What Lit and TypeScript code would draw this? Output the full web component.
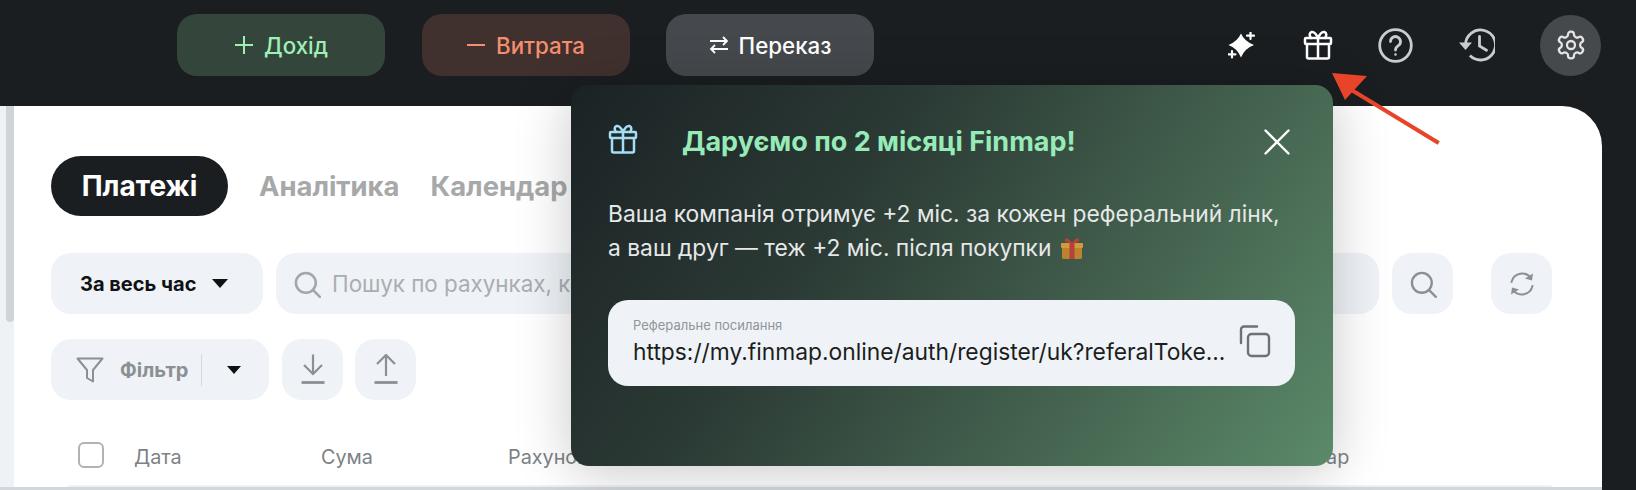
import { LitElement, html, css, svg } from "lit";
import { customElement } from "lit/decorators.js";

const gift = (cls: string) => html`<svg class=${cls} viewBox="0 0 30 30" fill="none" stroke="currentColor" stroke-width="2.500" stroke-linejoin="round" stroke-linecap="round">
  <rect x="2" y="8" width="26" height="6" rx="1"/><path d="M4 14v13a1.500 1.500 0 0 0 1.500 1.500h19A1.500 1.500 0 0 0 26 27V14M15 8v20.500"/>
  <path d="M15 8C13 3.500 10.500 1.500 8.500 2S6 5.500 8 8M15 8c2-4.500 4.500-6.500 6.500-6S24 5.500 22 8"/></svg>`;

const caret = html`<svg class="caret" viewBox="0 0 16 10" preserveAspectRatio="none"><path d="M0 0h16L8 10z" fill="currentColor"/></svg>`;
const searchPath = svg`<circle cx="11" cy="11" r="8.500"/><path d="M17.500 17.500 23 23"/>`;

@customElement("app-root")
export class AppRoot extends LitElement {
  static styles = css`
    :host { display: block; position: relative; width: 1636px; height: 490px; overflow: hidden; background: #1a1e21; font-family: Inter, "Noto Sans", sans-serif; color: #16191c; }
    svg { display: block; flex: none; }
    .top { height: 106px; display: flex; align-items: flex-start; padding: 14px 35px 0 177px; box-sizing: border-box; }
    .act { width: 208px; height: 62px; border-radius: 20px; display: flex; align-items: center; justify-content: center; gap: 10px; font-size: 22.300px; font-weight: 500; margin-right: 36.500px; }
    .act svg { width: 20px; height: 20px; }
    .inc { background: #34463c; color: #9ef0b5; }
    .exp { background: #40312e; color: #f68d6e; }
    .tr { background: #45484c; color: #fff; }
    .tools { margin-left: auto; display: flex; align-items: center; height: 62px; color: #fff; }
    .spark { width: 27px; height: 27px; margin-right: 48px; }
    .tgift { width: 30px; height: 30px; margin-right: 45px; }
    .help { width: 35px; height: 35px; margin-right: 46px; color: #c9cbcc; }
    .hist { width: 36px; height: 34px; margin-right: 45px; color: #c9cbcc; }
    .gear { width: 61px; height: 61px; border-radius: 50%; background: #46494c; display: flex; align-items: center; justify-content: center; color: #e4e5e6; }
    .gear svg { width: 32px; height: 32px; }
    .body { display: flex; height: 381px; }
    .rail { width: 14px; background: #eef2f6; padding-left: 6px; box-sizing: border-box; flex: none; }
    .thumb { width: 8px; height: 216px; background: #cfd4d9; border-radius: 0 0 4px 4px; }
    .card { width: 1588px; background: #fff; border-top-right-radius: 40px; box-sizing: border-box; padding: 50px 50px 0 37px; }
    .bar { height: 3px; width: 1602px; background: #d2d7db; }
    .tabs { display: flex; align-items: center; height: 60px; gap: 31px; font-size: 27.400px; font-weight: 700; color: #a6a8a9; }
    .tab-on { background: #1a1e21; color: #fff; border-radius: 30px; height: 60px; width: 177px; font-size: 28px; display: flex; align-items: center; justify-content: center; }
    .row { display: flex; height: 61px; gap: 13px; }
    .r1 { margin-top: 37px; }
    .r2 { margin-top: 25px; }
    .pill { background: #eff3f7; border-radius: 20px; display: flex; align-items: center; justify-content: center; flex: none; color: #8b9094; }
    .period { width: 212px; box-sizing: border-box; justify-content: flex-start; padding-left: 29px; gap: 16px; color: #0f1113; font-size: 20px; font-weight: 700; }
    .caret { width: 16px; height: 9px; color: #0f1113; }
    .search { flex: 1; justify-content: flex-start; padding-left: 17px; gap: 11px; font-size: 22.400px; color: #a9aeb2; min-width: 0; white-space: nowrap; overflow: hidden; }
    .search svg { width: 28px; height: 28px; color: #a2a7ab; }
    .sq { width: 61px; }
    .sq svg { width: 28px; height: 28px; }
    .sq .io { width: 32px; height: 32px; }
    .gap { margin-left: 25px; }
    .up { margin-left: -1px; }
    .filter { width: 218px; justify-content: flex-start; padding-left: 25px; box-sizing: border-box; font-size: 20px; font-weight: 700; }
    .filter .fn { width: 28px; height: 26px; margin-right: 16px; }
    .filter i { width: 1px; height: 32px; background: #d5d9dc; margin: 0 25px 0 13px; }
    .filter .caret { width: 14px; height: 8px; }
    .head { display: flex; align-items: center; height: 28px; margin-top: 41px; font-size: 19.800px; color: #7d8285; padding-left: 27px; }
    .check { width: 26px; height: 26px; border: 2px solid #b0b3b5; border-radius: 6px; box-sizing: border-box; margin-right: 30px; }
    .head span { flex: none; padding-top: 3px; }
    .first { height: 2px; margin: 16px 0 0 17px; background: #eef2f6; border-radius: 6px 6px 0 0; }

    .pop { position: absolute; left: 571px; top: 85px; width: 762px; height: 381px; box-sizing: border-box; border-radius: 18px; padding: 39px 38px 0 37px; background: linear-gradient(125deg, #1b2224 0%, #2b3a35 35%, #456450 70%, #5b8a69 100%); box-shadow: 0 6px 55px rgba(0,0,0,.22); color: #e6e8e8; }
    .p-head { display: flex; align-items: center; height: 35px; }
    .p-gift { width: 30px; height: 30px; color: #a4def5; margin-right: 44px; align-self: flex-start; }
    .p-title { font-size: 27px; font-weight: 700; color: #97ebb9; }
    .close { margin-left: auto; width: 26px; height: 26px; color: #fff; margin-right: 5px; }
    .p-text { margin: 38px 0 0; font-size: 22.800px; line-height: 33.500px; white-space: nowrap; }
    .em { display: inline-block; width: 24px; height: 24px; vertical-align: -4px; margin-left: 2px; }
    .field { margin-top: 36px; height: 86px; border-radius: 20px; background: #eff3f7; display: flex; align-items: center; padding: 0 24px 0 25px; color: #1b1e20; }
    .f-col { flex: 1; min-width: 0; margin-top: -3px; }
    .f-label { font-size: 13px; line-height: 16px; color: #90959a; }
    .f-url { font-size: 22.800px; line-height: 30px; margin-top: 4px; white-space: nowrap; }
    .copy { width: 32px; height: 33px; color: #6d7276; margin-top: -4px; }
    .arrow { position: absolute; left: 1320px; top: 60px; width: 130px; height: 95px; }
  `;

  render() {
    return html`
      <div class="top">
        <div class="act inc"><svg viewBox="0 0 20 20" stroke="currentColor" stroke-width="2" fill="none"><path d="M10 1v18M1 10h18"/></svg>Дохід</div>
        <div class="act exp"><svg viewBox="0 0 20 20" stroke="currentColor" stroke-width="2" fill="none"><path d="M1 10h18"/></svg>Витрата</div>
        <div class="act tr"><svg viewBox="0 0 20 20" stroke="currentColor" stroke-width="1.800" fill="none"><path d="M1 6h17M14 2l4 4-4 4M19 14H2M6 10l-4 4 4 4"/></svg>Переказ</div>
        <div class="tools">
          <svg class="spark" viewBox="0 0 27 27" fill="currentColor"><path d="M13 1.500Q16.500 9.500 26 13 16.500 16.500 13 25.500 9.500 16.500 .500 13 9.500 9.500 13 1.500z"/><path d="M22.500 .500v6.500M19 3.700h7M4 19v6.500M.500 22.300h7" stroke="currentColor" stroke-width="2.200" stroke-linecap="round"/></svg>
          ${gift("tgift")}
          <svg class="help" viewBox="0 0 35 35" fill="none" stroke="currentColor" stroke-width="2.800" stroke-linecap="round"><circle cx="17.500" cy="17.500" r="15.800"/><path d="M12.500 13.500a5 5 0 1 1 7.800 4.200c-1.800 1.200-2.800 2.200-2.800 4.300"/><circle cx="17.500" cy="26.500" r="1.300" fill="currentColor" stroke="none"/></svg>
          <svg class="hist" viewBox="0 0 36 34" fill="none" stroke="currentColor" stroke-width="2.800"><path d="M6.500 17a15 15 0 1 1 4.400 10.600"/><path d="M0 14.500h13L6.500 22z" fill="currentColor" stroke="none"/><path d="M20.500 8.500v9.500l7 4.200" stroke-linecap="round"/></svg>
          <div class="gear"><svg viewBox="0 0 24 24" fill="none" stroke="currentColor" stroke-width="1.700" stroke-linejoin="round"><path d="M12.220 2h-.44a2 2 0 0 0-2 2v.18a2 2 0 0 1-1 1.730l-.43.250a2 2 0 0 1-2 0l-.15-.08a2 2 0 0 0-2.730.730l-.22.380a2 2 0 0 0 .730 2.730l.15.100a2 2 0 0 1 1 1.720v.510a2 2 0 0 1-1 1.740l-.15.090a2 2 0 0 0-.730 2.730l.22.380a2 2 0 0 0 2.730.730l.15-.08a2 2 0 0 1 2 0l.43.250a2 2 0 0 1 1 1.730V20a2 2 0 0 0 2 2h.44a2 2 0 0 0 2-2v-.18a2 2 0 0 1 1-1.730l.43-.25a2 2 0 0 1 2 0l.15.080a2 2 0 0 0 2.730-.730l.22-.39a2 2 0 0 0-.730-2.730l-.15-.08a2 2 0 0 1-1-1.740v-.5a2 2 0 0 1 1-1.740l.15-.09a2 2 0 0 0 .730-2.730l-.22-.38a2 2 0 0 0-2.730-.730l-.15.080a2 2 0 0 1-2 0l-.43-.25a2 2 0 0 1-1-1.730V4a2 2 0 0 0-2-2z"/><circle cx="12" cy="12" r="3"/></svg></div>
        </div>
      </div>
      <div class="body">
        <div class="rail"><div class="thumb"></div></div>
        <div class="card">
          <div class="tabs"><div class="tab-on">Платежі</div><div>Аналітика</div><div>Календар</div></div>
          <div class="row r1">
            <div class="pill period">За весь час ${caret}</div>
            <div class="pill search"><svg viewBox="0 0 24 24" fill="none" stroke="currentColor" stroke-width="2.200" stroke-linecap="round">${searchPath}</svg>Пошук по рахунках, контрагентах, категоріях</div>
            <div class="pill sq"><svg viewBox="0 0 24 24" fill="none" stroke="currentColor" stroke-width="2" stroke-linecap="round">${searchPath}</svg></div>
            <div class="pill sq gap"><svg viewBox="0 0 28 28" fill="none" stroke="currentColor" stroke-width="2" stroke-linecap="round"><path d="M3.500 12A11 11 0 0 1 23 8"/><path d="M24.500 16A11 11 0 0 1 5 20"/><path d="M25 3.500l-1 7-7-2z" fill="currentColor" stroke="none"/><path d="M3 24.500l1-7 7 2z" fill="currentColor" stroke="none"/></svg></div>
          </div>
          <div class="row r2">
            <div class="pill filter"><svg class="fn" viewBox="0 0 28 26" fill="none" stroke="currentColor" stroke-width="2" stroke-linejoin="round"><path d="M1.500 1.500h25L17 13v11.500l-6-3.500v-8z"/></svg>Фільтр<i></i>${caret}</div>
            <div class="pill sq"><svg class="io" viewBox="0 0 32 32" fill="none" stroke="currentColor" stroke-width="2.200"><path d="M16 .500V19M7 11l9 9 9-9"/><path d="M4.500 28.500h23" stroke-width="2.800"/></svg></div>
            <div class="pill sq up"><svg class="io" viewBox="0 0 32 32" fill="none" stroke="currentColor" stroke-width="2.200"><path d="M16 22V2M7 10l9-9 9 9"/><path d="M4.500 28.500h23" stroke-width="2.800"/></svg></div>
          </div>
          <div class="head">
            <div class="check"></div>
            <span style="width:187px">Дата</span><span style="width:187px">Сума</span><span style="width:746px">Рахунок</span><span>Коментар</span>
          </div>
          <div class="first"></div>
        </div>
      </div>
      <div class="bar"></div>

      <div class="pop">
        <div class="p-head">
          ${gift("p-gift")}
          <div class="p-title">Даруємо по 2 місяці Finmap!</div>
          <svg class="close" viewBox="0 0 26 26" stroke="currentColor" stroke-width="2.400" stroke-linecap="round"><path d="M1.500 1.500l23 23M24.500 1.500l-23 23"/></svg>
        </div>
        <p class="p-text">Ваша компанія отримує +2 міс. за кожен реферальний лінк,<br>а ваш друг — теж +2 міс. після покупки
          <svg class="em" style="display:inline-block" viewBox="0 0 24 24"><rect x="2" y="8" width="20" height="15" rx="1.500" fill="#b9832f"/><rect x="1" y="7" width="22" height="5" rx="1" fill="#d29a3c"/><rect x="9.500" y="7" width="5" height="16" fill="#b8403a"/><path d="M12 7C9 2 5 1 5 4s4 3 7 3zM12 7c3-5 7-6 7-3s-4 3-7 3z" fill="#b8403a"/></svg></p>
        <div class="field">
          <div class="f-col">
            <div class="f-label">Реферальне посилання</div>
            <div class="f-url">https://my.finmap.online/auth/register/uk?referalToke...</div>
          </div>
          <svg class="copy" viewBox="0 0 32 33" fill="none" stroke="currentColor" stroke-width="2.400" stroke-linecap="round"><rect x="9" y="9" width="21" height="22" rx="3.500"/><path d="M2 18V4.500A3 3 0 0 1 5 1.500h13"/></svg>
        </div>
      </div>

      <svg class="arrow" viewBox="0 0 130 95"><path d="M117 82 30 29" stroke="#e8442a" stroke-width="4" stroke-linecap="square"/><path d="M12 13 L47 16 L25 40z" fill="#e8442a"/></svg>
    `;
  }
}
